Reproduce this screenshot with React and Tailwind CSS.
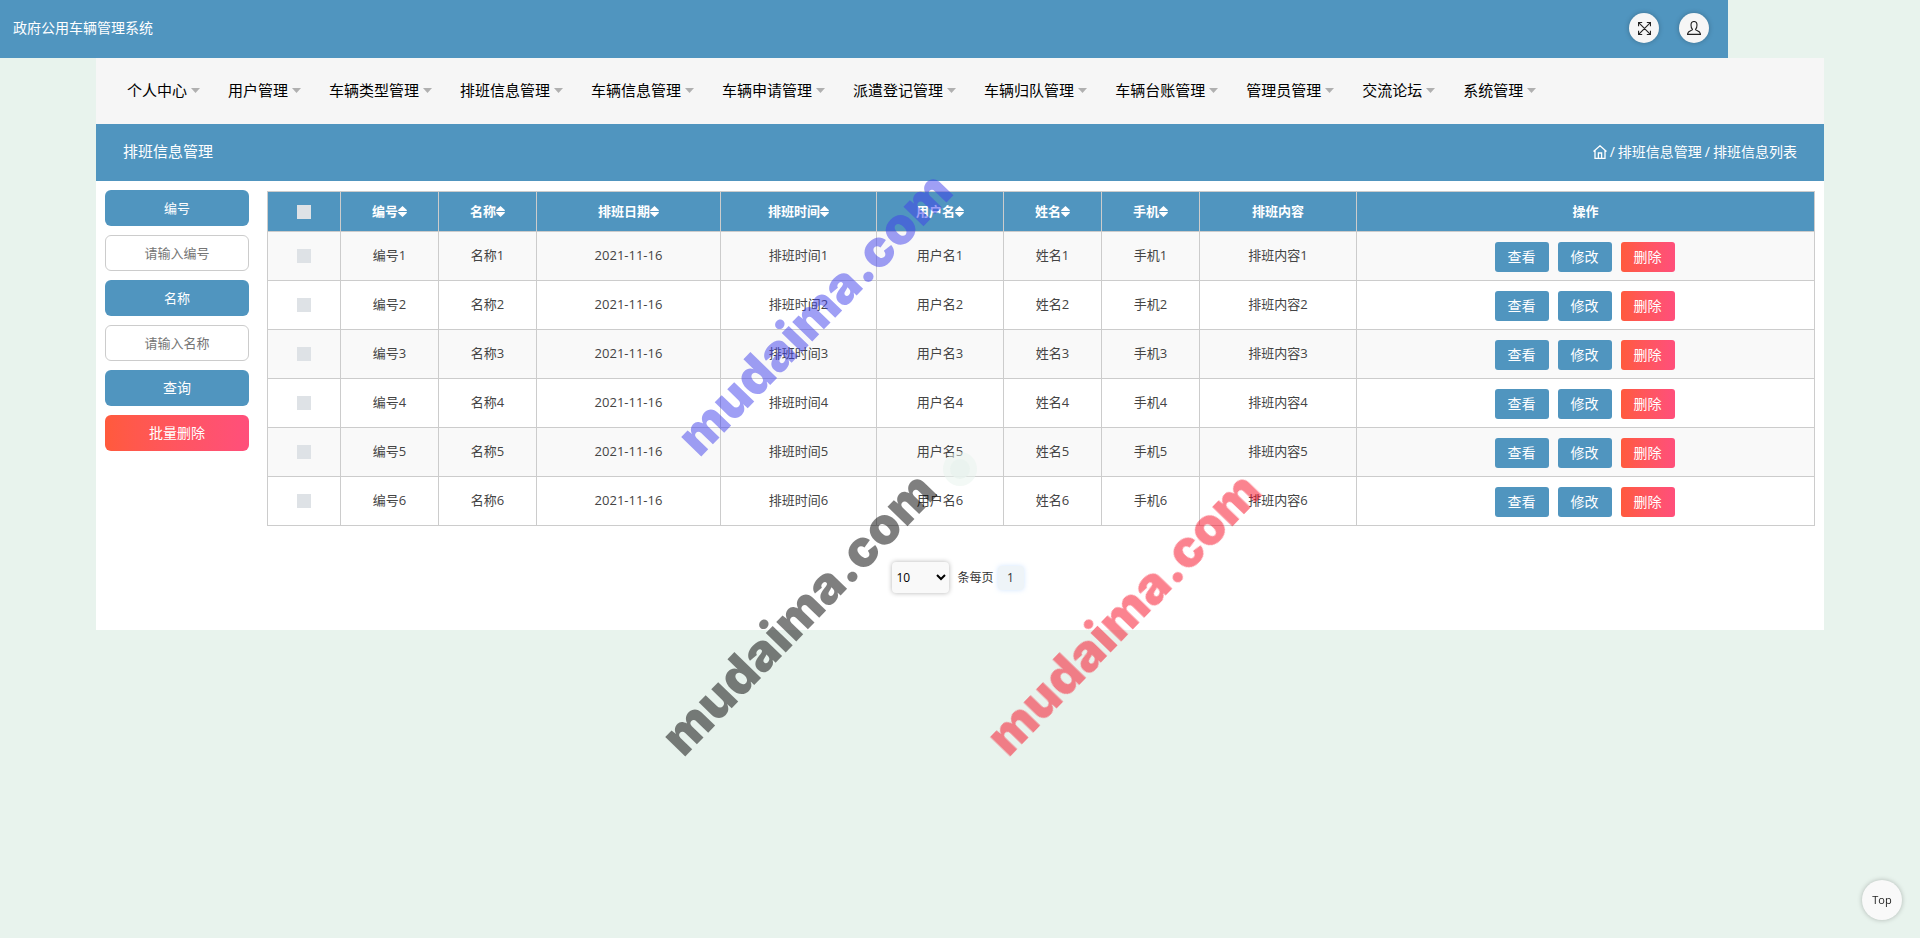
import React from 'react';

const menus = [
  '个人中心', '用户管理', '车辆类型管理', '排班信息管理', '车辆信息管理', '车辆申请管理',
  '派遣登记管理', '车辆归队管理', '车辆台账管理', '管理员管理', '交流论坛', '系统管理',
];

const columns = [
  { title: '编号', width: 'w-[98px]', sortable: true },
  { title: '名称', width: 'w-[98px]', sortable: true },
  { title: '排班日期', width: 'w-[184px]', sortable: true },
  { title: '排班时间', width: 'w-[156px]', sortable: true },
  { title: '用户名', width: 'w-[127px]', sortable: true },
  { title: '姓名', width: 'w-[98px]', sortable: true },
  { title: '手机', width: 'w-[98px]', sortable: true },
  { title: '排班内容', width: 'w-[157px]', sortable: false },
];

const rows = [1, 2, 3, 4, 5, 6].map((n) => ({
  id: n,
  cells: [`编号${n}`, `名称${n}`, '2021-11-16', `排班时间${n}`, `用户名${n}`, `姓名${n}`, `手机${n}`, `排班内容${n}`],
}));

const watermarks = [
  { id: 'blue', style: 'left-[814px] top-[313px] text-[#4040eb]' },
  { id: 'black', style: 'left-[798px] top-[613px] text-black' },
  { id: 'red', style: 'left-[1123px] top-[613px] text-[#f70921]' },
];

function SortIcon() {
  return (
    <svg className="h-[11px] w-[9px]" viewBox="0 0 9 11" fill="currentColor" aria-hidden="true">
      <path d="M4.5 0 L9 4.2 Q9 5 8.2 5 L.8 5 Q0 5 0 4.2 Z" />
      <path d="M4.5 11 L9 6.8 Q9 6 8.2 6 L.8 6 Q0 6 0 6.8 Z" />
    </svg>
  );
}

function TopBar() {
  return (
    <header className="flex h-[58px] w-9/10 items-center justify-between bg-[#5095bf] pr-[19px] pb-0.5 pl-[13px] text-white">
      <a href="#home" className="text-sm">政府公用车辆管理系统</a>
      <div className="flex gap-5 text-[#222]">
        <button type="button" aria-label="全屏" className="flex size-[30px] items-center justify-center rounded-full bg-[#f6f6f6] shadow-[0_0_5px_rgba(0,0,0,0.25)]">
          <svg className="size-[13px]" viewBox="0 0 14 14" fill="none" stroke="currentColor" strokeWidth="1.2">
            <path d="M1 1 L13 13 M13 1 L1 13 M.6 4.5 V.6 H4.5 M9.5 .6 H13.4 V4.5 M13.4 9.5 V13.4 H9.5 M4.5 13.4 H.6 V9.5" />
          </svg>
        </button>
        <button type="button" aria-label="用户" className="flex size-[30px] items-center justify-center rounded-full bg-[#f6f6f6] shadow-[0_0_5px_rgba(0,0,0,0.25)]">
          <svg className="size-[14px]" viewBox="0 0 14 14" fill="none" stroke="currentColor" strokeWidth="1.1">
            <path d="M5.5 8.5 C4.4 7.5 4 6 4 4 C4 1.8 5.2 .5 7 .5 C8.8 .5 10 1.8 10 4 C10 6 9.6 7.5 8.5 8.5 C8.5 9.8 13.5 9.4 13.5 13.4 H.5 C.5 9.4 5.5 9.8 5.5 8.5 Z" />
          </svg>
        </button>
      </div>
    </header>
  );
}

function NavMenu() {
  return (
    <nav className="flex h-[66px] items-center bg-[#f6f6f6] px-[17px] pb-0.5 text-[15px] text-black">
      {menus.map((menu) => (
        <a key={menu} href="#menu" className="flex items-center gap-1 px-3.5 whitespace-nowrap">
          {menu}
          <svg className="h-[5px] w-[9px] text-[#b0b0b0]" viewBox="0 0 9 5" fill="currentColor" aria-hidden="true">
            <path d="M0 0 H9 L4.5 5 Z" />
          </svg>
        </a>
      ))}
    </nav>
  );
}

function TitleBar() {
  return (
    <div className="flex h-[57px] items-center justify-between bg-[#5095bf] px-[27px] pb-0.5 text-white">
      <h1 className="text-[15px]">排班信息管理</h1>
      <div className="flex items-center gap-[3px] text-sm">
        <a href="#home" aria-label="首页">
          <svg className="size-[14px]" viewBox="0 0 14 14" fill="none" stroke="currentColor" strokeWidth="1.3">
            <path d="M.5 6.5 L7 .8 L13.5 6.5 M2 5.5 V13.3 H12 V5.5 M5.4 13 V8 H8.6 V13" />
          </svg>
        </a>
        <span>/</span>
        <a href="#schedule">排班信息管理</a>
        <span>/</span>
        <span>排班信息列表</span>
      </div>
    </div>
  );
}

function SearchPanel() {
  return (
    <form className="flex w-36 shrink-0 flex-col gap-[9px] text-center text-[13px]">
      <label htmlFor="bianhao" className="h-9 rounded-md bg-[#5095bf] leading-9 text-white">编号</label>
      <input id="bianhao" type="text" placeholder="请输入编号" className="h-9 rounded-md border border-[#ccc] text-center placeholder:text-[#757575]" />
      <label htmlFor="mingcheng" className="h-9 rounded-md bg-[#5095bf] leading-9 text-white">名称</label>
      <input id="mingcheng" type="text" placeholder="请输入名称" className="h-9 rounded-md border border-[#ccc] text-center placeholder:text-[#757575]" />
      <button type="button" className="h-9 rounded-md bg-[#5095bf] text-sm text-white">查询</button>
      <button type="button" className="h-9 rounded-md bg-linear-to-r from-[#ff5a3c] to-[#ff4f7b] text-sm text-white">批量删除</button>
    </form>
  );
}

function ScheduleTable() {
  return (
    <table className="mt-px w-full table-fixed border-collapse text-center text-[13px] text-[#444]">
      <thead>
        <tr className="h-10 bg-[#5095bf] text-white">
          <th className="w-[73px] border border-[#ccc]">
            <input type="checkbox" aria-label="全选" className="block mx-auto size-[14px] appearance-none bg-[#dee2e6]" />
          </th>
          {columns.map((col) => (
            <th key={col.title} className={`${col.width} border border-[#ccc] font-bold`}>
              <span className="flex items-center justify-center">
                {col.title}
                {col.sortable && <SortIcon />}
              </span>
            </th>
          ))}
          <th className="border border-[#ccc] font-bold">操作</th>
        </tr>
      </thead>
      <tbody>
        {rows.map((row) => (
          <tr key={row.id} className="h-[49px] odd:bg-[#f9f9f9]">
            <td className="border border-[#ccc]">
              <input type="checkbox" aria-label={row.cells[0]} className="block mx-auto size-[14px] appearance-none bg-[#dee2e6]" />
            </td>
            {row.cells.map((cell) => (
              <td key={cell} className="border border-[#ccc]">{cell}</td>
            ))}
            <td className="border border-[#ccc]">
              <div className="flex justify-center gap-[9px] pt-0.5 pr-0.5 text-sm text-white">
                <button type="button" className="h-[30px] w-[54px] rounded-[3px] bg-[#5095bf]">查看</button>
                <button type="button" className="h-[30px] w-[54px] rounded-[3px] bg-[#5095bf]">修改</button>
                <button type="button" className="h-[30px] w-[54px] rounded-[3px] bg-linear-to-r from-[#ff5a3c] to-[#ff4f7b]">删除</button>
              </div>
            </td>
          </tr>
        ))}
      </tbody>
    </table>
  );
}

function Pagination() {
  return (
    <div className="mt-9 flex items-center justify-center pr-1 pb-7 text-xs text-[#333]">
      <label className="flex items-center gap-2">
        <select defaultValue="10" className="h-[31px] w-[57px] rounded bg-[#f9f9f9] text-black shadow-[0_0_5px_rgba(0,0,0,0.3)]">
          <option value="10">10</option>
          <option value="25">25</option>
          <option value="50">50</option>
        </select>
        条每页
      </label>
      <button type="button" className="ml-1 h-6 w-[26px] rounded bg-[#eef4f8] shadow-[0_0_5px_rgba(180,215,255,0.6)]">1</button>
    </div>
  );
}

export default function App() {
  return (
    <div className="relative min-h-screen overflow-hidden bg-[#e8f3ed] font-['Open_Sans','Noto_Sans_CJK_SC',sans-serif]">
      <TopBar />
      <main className="mx-auto w-9/10">
        <NavMenu />
        <TitleBar />
        <section className="bg-white p-[9px]">
          <div className="flex gap-[18px]">
            <SearchPanel />
            <ScheduleTable />
          </div>
          <Pagination />
        </section>
      </main>

      <div className="pointer-events-none fixed top-1/2 left-1/2 flex size-[34px] -translate-1/2 items-center justify-center rounded-full bg-[#e8f3ed]/50">
        <div className="size-5 rounded-full bg-[#e8f3ed]/80" />
      </div>
      {watermarks.map((mark) => (
        <span key={mark.id} className={`${mark.style} pointer-events-none absolute -translate-1/2 -rotate-46 font-['Inter',sans-serif] text-[51px] leading-none font-black opacity-50`}>
          mudaima.com
        </span>
      ))}
      <button type="button" className="fixed right-[18px] bottom-[18px] size-10 rounded-full bg-[#f9f9f9] text-[11px] text-[#222] shadow-[0_0_5px_rgba(0,0,0,0.25)]">
        Top
      </button>
    </div>
  );
}
